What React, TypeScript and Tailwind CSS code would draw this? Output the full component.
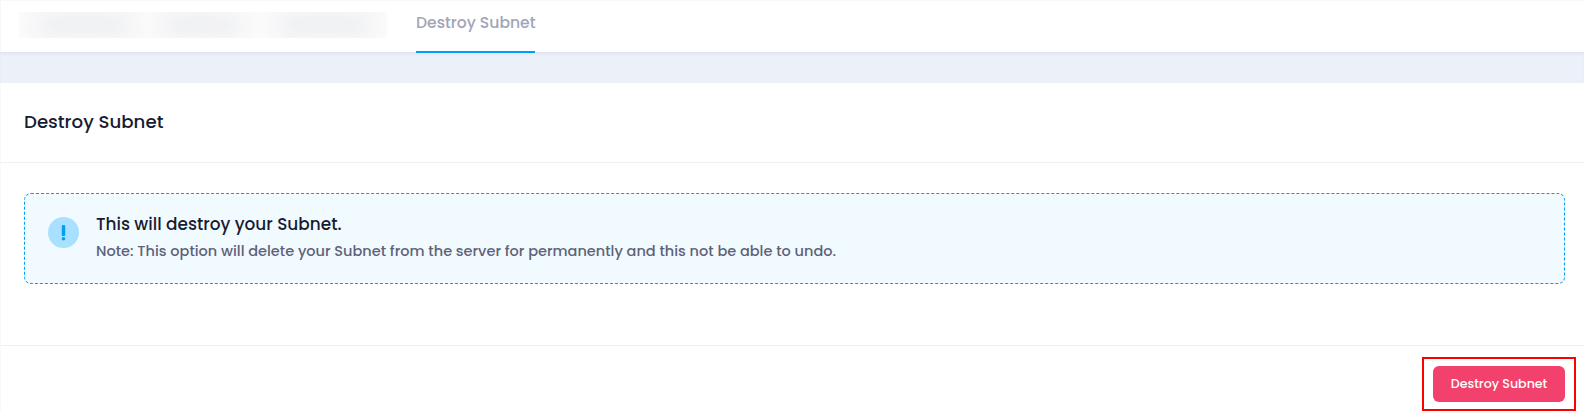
export default function App() {
  return (
    <div className="flex h-[412px] w-full flex-col overflow-hidden bg-white font-[Poppins,Inter,sans-serif] whitespace-nowrap">
      <header className="flex h-[52px] shrink-0 border-t border-l border-[#f8f8fa] bg-white pl-[18px]">
        <div className="mt-[11px] flex h-[26px] w-[368px] shrink-0 items-center overflow-hidden bg-[#fbfbfc]">
          <div className="ml-[16px] h-[20px] w-[98px] rounded-full bg-[#ebecee] blur-[11px]" />
          <div className="ml-[29px] h-[20px] w-[80px] rounded-full bg-[#ebecee] blur-[11px]" />
          <div className="ml-[35px] h-[20px] w-[96px] rounded-full bg-[#ebecee] blur-[11px]" />
        </div>
        <nav className="ml-[29px] flex">
          <a className="relative z-10 h-[52px] w-[119px] border-b-2 border-[#009ef7] text-[15.6px] leading-[43px] font-medium text-[#a1a5b7]">
            <span>Destroy Subnet</span>
          </a>
        </nav>
      </header>
      <div className="h-[31px] shrink-0 bg-[#ebf0f9] shadow-[inset_0_3px_3px_-1px_#dfe4ef]" />
      <main className="flex grow flex-col border-l border-[#f8f9fc] bg-white">
        <div className="flex h-[80px] shrink-0 items-center border-b border-[#eff0f4] pb-[2px] pl-[23px]">
          <h1 className="text-[18.2px] leading-[27px] font-medium text-[#181c32]"><span>Destroy Subnet</span></h1>
        </div>
        <div className="h-[182px] shrink-0 pt-[30px] pr-[19px] pl-[23px]">
          <section className="flex h-[91px] rounded-[7px] border border-dashed border-[#009ef7] bg-[#f1faff] pt-[23px] pl-[23px]">
            <svg className="h-[31px] w-[31px] shrink-0" viewBox="0 0 31 31">
              <circle cx="15.5" cy="15.5" r="15.5" fill="#a9dfff" />
              <rect x="13.8" y="8" width="3.4" height="11" rx="1" fill="#009ef7" />
              <circle cx="15.5" cy="21.7" r="1.8" fill="#009ef7" />
            </svg>
            <div className="-mt-[5px] ml-[17px]">
              <h2 className="text-[16.9px] leading-[24px] font-medium text-[#181c32]"><span>This will destroy your Subnet.</span></h2>
              <p className="mt-[3px] text-[14.5px] leading-[24px] font-medium text-[#5e6278]"><span>Note: This option will delete your Subnet from the server for permanently and this not be able to undo.</span></p>
            </div>
          </section>
        </div>
        <footer className="flex grow justify-end border-t border-[#eff0f2] pt-[11px] pr-[8px]">
          <div className="h-[54px] w-[154px] border-2 border-[#ff0000] pt-[7px] pl-[9px]">
            <button className="h-[36px] w-[132px] rounded-[6px] bg-[#f1416c] text-[12.6px] font-medium text-white"><span>Destroy Subnet</span></button>
          </div>
        </footer>
      </main>
    </div>
  );
}
